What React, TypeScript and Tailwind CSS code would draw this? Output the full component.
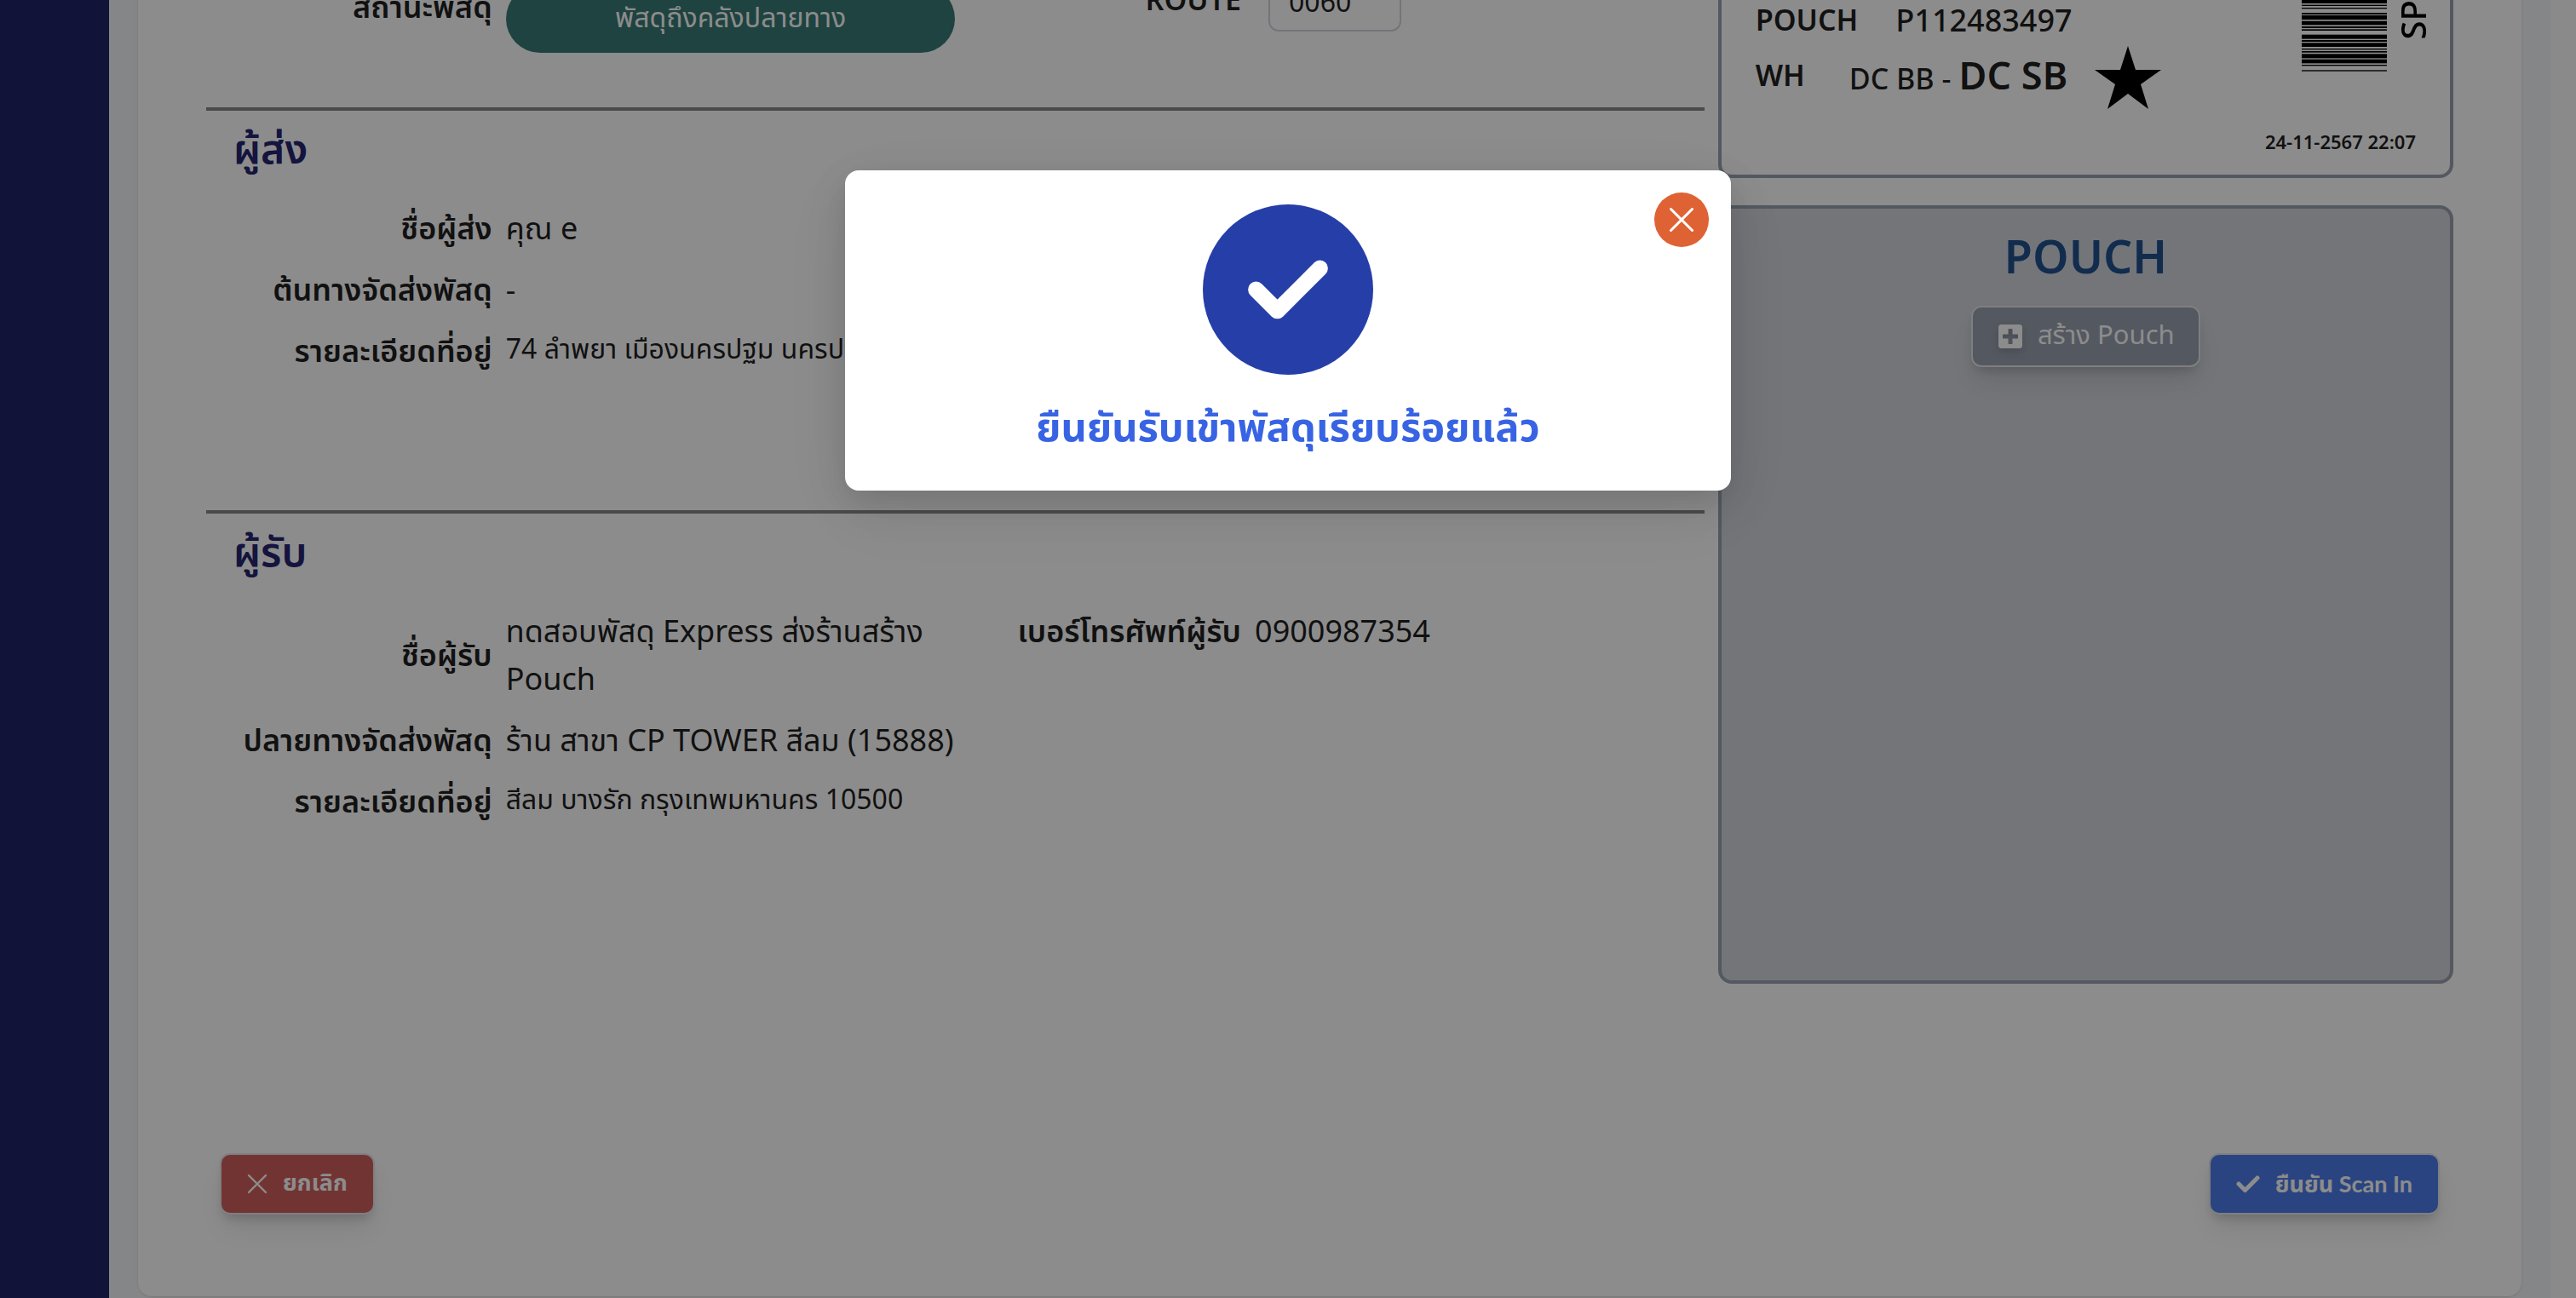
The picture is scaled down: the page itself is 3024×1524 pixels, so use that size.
import type { ReactNode } from "react";
import { FaPlusSquare } from "react-icons/fa";

const BARS: [number, number][] = [
  [0, 12], [17, 4], [27, 4], [45, 6], [54, 15], [74, 14], [93, 6], [103, 5],
  [122, 15], [141, 6], [151, 14], [171, 4], [180, 5], [190, 15], [209, 14], [228, 4], [247, 4],
];

function Row({ label, children }: { label: string; children: ReactNode }) {
  return (
    <div className="grid grid-cols-[minmax(0,2fr)_minmax(0,3fr)] py-2">
      <dt className="self-center pr-4 text-right font-semibold">{label}</dt>
      <dd>{children}</dd>
    </div>
  );
}

function Section({ title, children }: { title: string; children: ReactNode }) {
  return (
    <section className="min-h-[473px] border-t-4 border-[#888888]">
      <h2 className="px-8 pt-4 text-[48px] leading-[64px] font-semibold text-[#262672]">{title}</h2>
      <div className="mt-6 grid grid-cols-2">{children}</div>
    </section>
  );
}

function CloseIcon({ className }: { className: string }) {
  return (
    <svg viewBox="0 0 24 24" fill="none" stroke="currentColor" strokeWidth="2.4" strokeLinecap="round" className={className} aria-hidden="true">
      <path d="M2 2 22 22M22 2 2 22" />
    </svg>
  );
}

function CheckIcon({ className }: { className: string }) {
  return (
    <svg viewBox="0 0 28 28" fill="none" stroke="currentColor" strokeWidth="5" strokeLinecap="round" strokeLinejoin="round" className={className} aria-hidden="true">
      <path d="M3 14 10.5 21.5 25 7" />
    </svg>
  );
}

const buttonShadow =
  "shadow-[0_20px_30px_-6px_rgba(0,0,0,0.1),0_8px_12px_-4px_rgba(0,0,0,0.15)]";

function Barcode() {
  return (
    <svg viewBox="0 0 100 252" preserveAspectRatio="none" className="h-[84px] w-[100px]" role="img" aria-label="Barcode">
      {BARS.map(([y, h]) => (
        <rect key={y} x="0" y={y} width="100" height={h} />
      ))}
    </svg>
  );
}

function Label() {
  return (
    <div className="flex h-[227px] flex-col rounded-2xl border-4 border-gray-400 pr-3 pb-5 pl-10 font-medium">
      <div className="flex flex-1 justify-between">
        <dl>
          <div className="flex items-center gap-11 pt-3">
            <dt className="text-[34px] font-semibold">POUCH</dt>
            <dd>P112483497</dd>
          </div>
          <div className="flex items-center gap-13">
            <dt className="text-[34px] font-semibold">WH</dt>
            <dd className="flex items-center gap-8 text-[34px]">
              <span>
                DC BB - <span className="text-[45px] leading-[72px] font-semibold">DC SB</span>
              </span>
              <svg viewBox="0 0 78 74" className="h-[74px] w-[78px]" aria-hidden="true">
                <path d="M39 0 48 28H78L54 45 63 74 39 56 15 74 24 45 0 28H30Z" fill="black" />
              </svg>
            </dd>
          </div>
        </dl>
        <div className="flex items-start gap-1.5 pt-3.5 text-black">
          <Barcode />
          <span className="rotate-180 text-[40px] leading-[56px] [writing-mode:vertical-rl]">SP</span>
        </div>
      </div>
      <time className="self-end pr-7 text-[22px] leading-8 font-semibold">24-11-2567 22:07</time>
    </div>
  );
}

export default function App() {
  return (
    <div className="flex h-screen overflow-hidden bg-gray-100 font-['Noto_Sans_Thai','Noto_Sans',sans-serif] text-[36px] leading-[56px] text-[#1f1f1f]">
      <aside className="w-32 shrink-0 bg-[#222466]" />
      <main className="min-w-0 flex-1 px-[34px]">
        <div className="-mt-[18px] rounded-b-2xl bg-white px-20 pb-24 shadow-sm">
          <div className="grid grid-cols-[2fr_1fr]">
            <div>
              <div className="grid h-36 grid-cols-2">
                <div className="grid grid-cols-[2fr_3fr] items-start">
                  <span className="pr-4 text-right font-semibold">สถานะพัสดุ</span>
                  <span className="rounded-full bg-[#387a76] py-3 text-center text-[32px] text-white">
                    พัสดุถึงคลังปลายทาง
                  </span>
                </div>
                <div className="grid grid-cols-[2fr_3fr] items-start">
                  <label htmlFor="route" className="-mt-2 pr-4 text-right text-[34px] font-semibold">ROUTE</label>
                  <input
                    id="route"
                    defaultValue="0060"
                    className="-mt-4 ml-4 h-[71px] w-[156px] rounded-xl border-2 border-gray-300 px-[22px] pt-1 text-[32px]"
                  />
                </div>
              </div>

              <Section title="ผู้ส่ง">
                <dl>
                  <Row label="ชื่อผู้ส่ง">คุณ e</Row>
                  <Row label="ต้นทางจัดส่งพัสดุ">-</Row>
                  <Row label="รายละเอียดที่อยู่">
                    <span className="block text-[32px] leading-[50px] whitespace-nowrap">74 ลำพยา เมืองนครปฐม นครปฐม 73000</span>
                  </Row>
                </dl>
              </Section>

              <Section title="ผู้รับ">
                <dl>
                  <Row label="ชื่อผู้รับ">ทดสอบพัสดุ Express ส่งร้านสร้าง Pouch</Row>
                  <Row label="ปลายทางจัดส่งพัสดุ">ร้าน สาขา CP TOWER สีลม (15888)</Row>
                  <Row label="รายละเอียดที่อยู่">
                    <span className="block text-[32px] leading-[50px]">สีลม บางรัก กรุงเทพมหานคร 10500</span>
                  </Row>
                </dl>
                <dl>
                  <Row label="เบอร์โทรศัพท์ผู้รับ">0900987354</Row>
                </dl>
              </Section>
            </div>

            <div className="flex flex-col gap-8 pl-4">
              <Label />
              <section className="flex min-h-[914px] flex-col items-center rounded-2xl border-4 border-gray-400 bg-gray-300 pt-5">
                <h2 className="text-[54px] leading-[80px] font-semibold text-[#21508e]">POUCH</h2>
                <button type="button" className={`mt-3.5 flex h-[72px] items-center gap-4 rounded-xl border-2 border-gray-200 bg-gray-400 px-7 text-[31px] text-white ${buttonShadow}`}>
                  <FaPlusSquare className="size-8 drop-shadow-lg" />
                  สร้าง Pouch
                </button>
              </section>
            </div>
          </div>

          <div className="mt-[199px] flex justify-between px-4 text-[27px] font-bold text-white">
            <button type="button" className={`flex h-[72px] items-center gap-[18px] rounded-xl border-2 border-gray-200 bg-[#cf605e] px-[30px] ${buttonShadow}`}>
              <CloseIcon className="size-6" />
              ยกเลิก
            </button>
            <button type="button" className={`flex h-[72px] items-center gap-[18px] rounded-xl border-2 border-gray-200 bg-[#4e7dec] px-[30px] font-['Lato','Noto_Sans_Thai',sans-serif] ${buttonShadow}`}>
              <CheckIcon className="size-7" />
              ยืนยัน Scan In
            </button>
          </div>
        </div>
      </main>
      <div className="w-[30px] shrink-0 bg-[#fcfcfc]" />

      <div className="fixed inset-0 flex items-start justify-center bg-black/45 pt-[200px]">
        <div
          role="dialog"
          aria-modal="true"
          aria-labelledby="dialog-title"
          className="relative flex w-[1040px] max-w-full flex-col items-center rounded-2xl bg-white pt-10 pb-8 shadow-[0_12px_32px_rgba(0,0,0,0.08),0_18px_56px_8px_rgba(0,0,0,0.08),0_24px_96px_12px_rgba(0,0,0,0.05)]"
        >
          <button type="button" aria-label="Close" className="absolute top-[26px] right-[26px] flex size-16 items-center justify-center rounded-full bg-[#df6234] text-white">
            <CloseIcon className="size-[30px]" />
          </button>
          <svg viewBox="0 0 16 16" className="size-[200px]" aria-hidden="true">
            <circle cx="8" cy="8" r="8" fill="#263ea8" />
            <path d="M5 8 7 10 11 6" fill="none" stroke="white" strokeWidth="1.5" strokeLinecap="round" strokeLinejoin="round" />
          </svg>
          <h1 id="dialog-title" className="mt-6 text-[47px] leading-[80px] font-bold text-[#3864e4]">
            ยืนยันรับเข้าพัสดุเรียบร้อยแล้ว
          </h1>
        </div>
      </div>
    </div>
  );
}
